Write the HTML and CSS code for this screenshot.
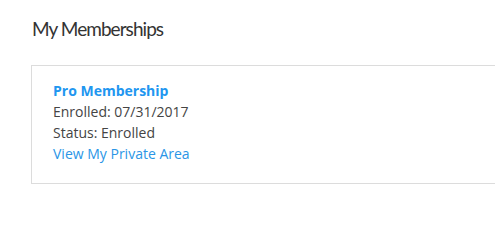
FILE: index.html
```html
<!DOCTYPE html>
<html>
<head>
<meta charset="utf-8">
<link rel="stylesheet" href="styles.css">
</head>
<body>
<div class="page">
  <h2 class="title">My Memberships</h2>
  <div class="card">
    <a class="name" href="#">Pro Membership</a>
    <div class="line">Enrolled: 07/31/2017</div>
    <div class="line">Status: Enrolled</div>
    <a class="link" href="#">View My Private Area</a>
  </div>
</div>
</body>
</html>
```
FILE: styles.css
```css
html, body {
  margin: 0;
  padding: 0;
  background: #fff;
  overflow: hidden;
}
.page {
  width: 560px;
  padding: 17px 0 0 31px;
  font-family: "Open Sans", sans-serif;
  color: #333;
}
.title {
  margin: 0 0 24px 1px;
  font-family: Lato, sans-serif;
  font-weight: 400;
  font-size: 19px;
  letter-spacing: -0.95px;
  line-height: 24px;
  color: #333;
}
.card {
  border: 1px solid #dcdcdc;
  padding: 14px 20px 19px 21px;
  display: flex;
  flex-direction: column;
  font-size: 14px;
  line-height: 21px;
}
.name {
  font-weight: 700;
  color: #2196f0;
  text-decoration: none;
}
.line {
  color: #444;
}
.link {
  color: #2a96e6;
  text-decoration: none;
  align-self: flex-start;
}
```
